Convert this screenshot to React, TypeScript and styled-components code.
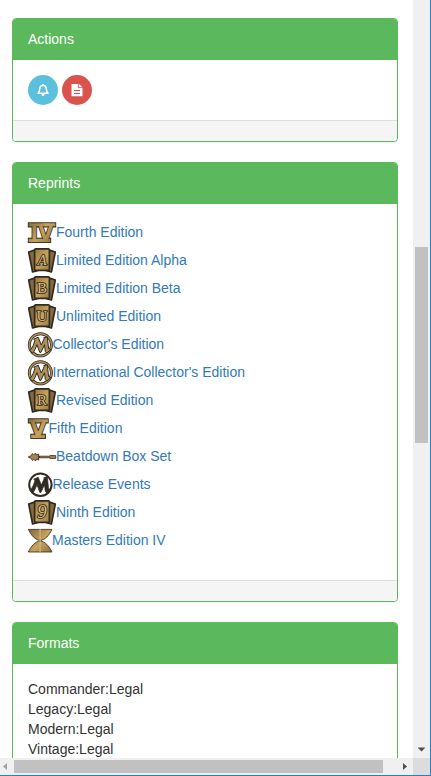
import React from "react";
import styled, { createGlobalStyle } from "styled-components";

const GlobalStyle = createGlobalStyle`
  *, *::before, *::after { box-sizing: border-box; }
  html, body { margin: 0; padding: 0; overflow: hidden; }
  body {
    font-family: "Liberation Sans", Arial, sans-serif;
    font-size: 14px;
    line-height: 20px;
    color: #333;
    background: #fff;
  }
`;

const Window = styled.div`
  display: grid;
  grid-template-columns: 413px 17px;
  grid-template-rows: 758px 17px;
  width: 431px;
  height: 776px;
  border-right: 1px solid #1883d7;
  border-bottom: 1px solid #1883d7;
  overflow: hidden;
`;

const Content = styled.main`
  overflow: hidden;
  padding: 18px 15px 0 12px;
  display: flex;
  flex-direction: column;
  gap: 20px;
`;

const PanelBox = styled.section`
  flex: none;
  border: 1px solid #5cb85c;
  border-radius: 4px;
  box-shadow: 0 1px 1px rgba(0, 0, 0, 0.05);
  background: #fff;
`;

const PanelHeading = styled.header`
  height: 41px;
  padding: 10px 15px;
  color: #fff;
  background: #5cb85c;
  border-radius: 3px 3px 0 0;
`;

const PanelBody = styled.div<{ $pad?: string }>`
  padding: ${(p) => p.$pad ?? "15px"};
`;

const PanelFooter = styled.footer`
  height: 21px;
  background: #f5f5f5;
  border-top: 1px solid #ddd;
  border-radius: 0 0 3px 3px;
`;

const ButtonRow = styled.div`
  display: flex;
  gap: 4px;
`;

const CircleButton = styled.button<{ $color: string }>`
  display: flex;
  align-items: center;
  justify-content: center;
  width: 30px;
  height: 30px;
  padding: 0;
  border: 0;
  border-radius: 50%;
  background: ${(p) => p.$color};
`;

const EditionList = styled.ul`
  margin: 0;
  padding: 0;
  list-style: none;
`;

const EditionRow = styled.li`
  display: flex;
  align-items: center;
  height: 28px;
`;

const EditionLink = styled.a`
  color: #337ab7;
  text-decoration: none;
  white-space: nowrap;
`;

const SetIcon = styled.svg`
  display: block;
  flex: none;
  overflow: visible;
`;

const VerticalBar = styled.div`
  display: flex;
  flex-direction: column;
  justify-content: space-between;
  padding: 247px 2px 6px;
  background: #f0f0f0;
`;

const VerticalThumb = styled.div`
  height: 196px;
  background: #c1c1c1;
`;

const HorizontalBar = styled.div`
  display: flex;
  align-items: center;
  padding: 0 6px 0 3px;
  background: #f0f0f0;
`;

const HorizontalThumb = styled.div`
  width: 369px;
  height: 13px;
  margin-left: 7px;
  margin-right: auto;
  background: #c1c1c1;
`;

const Corner = styled.div`
  background: #dcdcdc;
`;

const Arrow = styled.svg`
  display: block;
  flex: none;
  align-self: center;
`;

const INK = "#2f2a22";

const Gradients = () => (
  <defs>
    <linearGradient id="bronze" gradientUnits="userSpaceOnUse" x1="0" y1="3" x2="28" y2="26">
      <stop offset="0" stopColor="#806536" />
      <stop offset="0.5" stopColor="#c9a35c" />
      <stop offset="1" stopColor="#806536" />
    </linearGradient>
  </defs>
);

/* Three fanned cards; the front one carries the set's mark. */
const CardsIcon = ({ mark }: { mark: string }) => (
  <SetIcon width="28" height="28" viewBox="0 0 28 28">
    <Gradients />
    <g stroke={INK} strokeWidth="1.7" strokeLinejoin="round">
      <path d="M.7 6 8 3.6 10 24.5 4.6 26Z" fill="#866b3c" />
      <path d="M27.3 6 20 3.6 18 24.5 23.4 26Z" fill="#866b3c" />
      <rect x="6.6" y="2.8" width="14.8" height="21.6" rx="1.2" fill="url(#bronze)" />
    </g>
    <text
      x="14"
      y={mark === "9" ? 19.6 : 18.8}
      textAnchor="middle"
      fontFamily="Liberation Serif, serif"
      fontSize={mark === "9" ? 19 : 15}
      fontStyle={mark === "9" || mark === "A" ? "italic" : "normal"}
      fill="#d8b878"
      stroke={INK}
      strokeWidth="1.7"
      paintOrder="stroke"
    >
      {mark}
    </text>
  </SetIcon>
);

/* Roman numeral emblem: numerals set between a top and a bottom slab. */
const NumeralIcon = ({
  mark,
  width,
  inset,
  foot,
}: {
  mark: string;
  width: number;
  inset: number;
  foot: [number, number];
}) => (
  <SetIcon width={width} height="28" viewBox={`0 0 ${width} 28`}>
    <Gradients />
    <g fill="url(#bronze)" stroke={INK} strokeWidth="1">
      <rect x="0.3" y="4.8" width={width - 0.6} height="4.2" />
      <rect x={foot[0]} y="20.2" width={foot[1]} height="4.2" />
    </g>
    <text
      x={inset}
      y="22.2"
      fontFamily="DejaVu Sans, sans-serif"
      fontSize="20.6"
      fontWeight="bold"
      textLength={width - inset * 2}
      lengthAdjust="spacingAndGlyphs"
      fill="url(#bronze)"
      stroke={INK}
      strokeWidth="1.6"
      paintOrder="stroke"
    >
      {mark}
    </text>
    <g fill="url(#bronze)">
      <rect x="0.8" y="5.3" width={width - 1.6} height="2.6" />
      <rect x={foot[0] + 0.5} y="21.2" width={foot[1] - 1} height="2.7" />
    </g>
  </SetIcon>
);

const PlaneswalkerIcon = ({ dark }: { dark?: boolean }) => (
  <SetIcon width="24.5" height="28" viewBox="0 0 24.5 28">
    <Gradients />
    {dark ? (
      <circle cx="12.4" cy="14.8" r="11.2" fill="#fff" stroke={INK} strokeWidth="2" />
    ) : (
      <>
        <circle cx="12.4" cy="14.8" r="11.1" fill="#fff" stroke={INK} strokeWidth="2.9" />
        <circle cx="12.4" cy="14.8" r="11.1" fill="none" stroke="#b0905a" strokeWidth="1.4" />
      </>
    )}
    <path
      d="M2 20.4C4.6 17.6 6 14 6.9 10.2L5.6 9.2 10.2 7.2 13.3 15 16.2 8.6 15.6 7.8 19.3 6.8 20.6 18.6 22.9 19.6 18.8 23 17.3 21.4 16.5 14.8 12.9 22.4 11.8 22.4 8.9 14.6C7.9 18 6.4 21 4.4 23.4Z"
      fill={dark ? INK : "#b0905a"}
      stroke={INK}
      strokeWidth={dark ? 0.7 : 1}
    />
  </SetIcon>
);

const MaceIcon = () => (
  <SetIcon width="28" height="28" viewBox="0 0 28 28">
    <g fill="#a98549" stroke={INK} strokeWidth="0.8" strokeLinejoin="round">
      <path d="M10 14.2H22V13.6H27.7V16.4H22V15.8H10Z" />
      <path d="M.2 15 3.3 13.5 4.3 11.5 5.8 12.9 7.5 11 8.3 13 10.9 12 10.2 14.2 12 15 10.2 15.8 10.9 18 8.3 17 7.5 19 5.8 17.1 4.3 18.5 3.3 16.5Z" />
    </g>
  </SetIcon>
);

const HourglassIcon = () => (
  <SetIcon width="24" height="28" viewBox="0 0 24 28">
    <Gradients />
    <g fill="url(#bronze)" stroke={INK} strokeWidth="0.8">
      <path d="M.4 3.4H23.9C21.2 9.4 17 14 12.1 14.4 7.3 14 3.1 9.4.4 3.4Z" />
      <path d="M.4 26H23.9C21.2 20 17 15.4 12.1 15 7.3 15.4 3.1 20 .4 26Z" />
    </g>
    <path d="M12.1 3V26.4" stroke="#cbb893" strokeWidth="1.1" />
  </SetIcon>
);

const BellIcon = () => (
  <svg width="14" height="14" viewBox="0 0 14 14">
    <path
      d="M2 10.3C3.2 9.2 3.6 8.2 3.7 6 3.8 3.8 5 2.5 7 2.3 9 2.5 10.2 3.8 10.3 6 10.4 8.2 10.8 9.2 12 10.3Z"
      fill="none"
      stroke="#fff"
      strokeWidth="1.5"
      strokeLinejoin="round"
    />
    <path d="M7 .9V2.5" stroke="#fff" strokeWidth="1.5" />
    <path d="M5.2 11H8.8Q8.4 13 7 13 5.6 13 5.2 11Z" fill="#fff" />
  </svg>
);

const FileIcon = () => (
  <svg width="12" height="14" viewBox="0 0 12 14">
    <path d="M.5 1H6.9V5H11.5V13.2H.5Z" fill="#fff" />
    <path d="M7.7.8 11.5 4.3H7.7Z" fill="#fff" />
    <path d="M3 7.5H9M3 10.5H9" stroke="#d9534f" strokeWidth="1" />
  </svg>
);

const editions: { name: string; icon: React.ReactNode }[] = [
  { name: "Fourth Edition", icon: <NumeralIcon mark="IV" width={28} inset={2.5} foot={[0.3, 22.4]} /> },
  { name: "Limited Edition Alpha", icon: <CardsIcon mark="A" /> },
  { name: "Limited Edition Beta", icon: <CardsIcon mark="B" /> },
  { name: "Unlimited Edition", icon: <CardsIcon mark="U" /> },
  { name: "Collector's Edition", icon: <PlaneswalkerIcon /> },
  { name: "International Collector's Edition", icon: <PlaneswalkerIcon /> },
  { name: "Revised Edition", icon: <CardsIcon mark="R" /> },
  { name: "Fifth Edition", icon: <NumeralIcon mark="V" width={20.5} inset={1.8} foot={[2.8, 14.6]} /> },
  { name: "Beatdown Box Set", icon: <MaceIcon /> },
  { name: "Release Events", icon: <PlaneswalkerIcon dark /> },
  { name: "Ninth Edition", icon: <CardsIcon mark="9" /> },
  { name: "Masters Edition IV", icon: <HourglassIcon /> },
];

const formats = ["Commander", "Legacy", "Modern", "Vintage"];

export default function App() {
  return (
    <>
      <GlobalStyle />
      <Window>
        <Content>
          <PanelBox>
            <PanelHeading>Actions</PanelHeading>
            <PanelBody>
              <ButtonRow>
                <CircleButton $color="#5bc0de" aria-label="Notify">
                  <BellIcon />
                </CircleButton>
                <CircleButton $color="#d9534f" aria-label="Report">
                  <FileIcon />
                </CircleButton>
              </ButtonRow>
            </PanelBody>
            <PanelFooter />
          </PanelBox>
          <PanelBox>
            <PanelHeading>Reprints</PanelHeading>
            <PanelBody $pad="14px 15px 26px">
              <EditionList>
                {editions.map((e) => (
                  <EditionRow key={e.name}>
                    {e.icon}
                    <EditionLink>{e.name}</EditionLink>
                  </EditionRow>
                ))}
              </EditionList>
            </PanelBody>
            <PanelFooter />
          </PanelBox>
          <PanelBox>
            <PanelHeading>Formats</PanelHeading>
            <PanelBody>
              {formats.map((f) => (
                <div key={f}>{f}:Legal</div>
              ))}
            </PanelBody>
            <PanelFooter />
          </PanelBox>
        </Content>
        <VerticalBar>
          <VerticalThumb />
          <Arrow width="7" height="5" viewBox="0 0 7 5">
            <path d="M0 .5H7V1L3.5 4.5 0 1Z" fill="#505050" />
          </Arrow>
        </VerticalBar>
        <HorizontalBar>
          <Arrow width="4" height="7" viewBox="0 0 4 7">
            <path d="M4 0V7L0 3.5Z" fill="#a3a3a3" />
          </Arrow>
          <HorizontalThumb />
          <Arrow width="4" height="7" viewBox="0 0 4 7">
            <path d="M0 0V7L4 3.5Z" fill="#505050" />
          </Arrow>
        </HorizontalBar>
        <Corner />
      </Window>
    </>
  );
}
